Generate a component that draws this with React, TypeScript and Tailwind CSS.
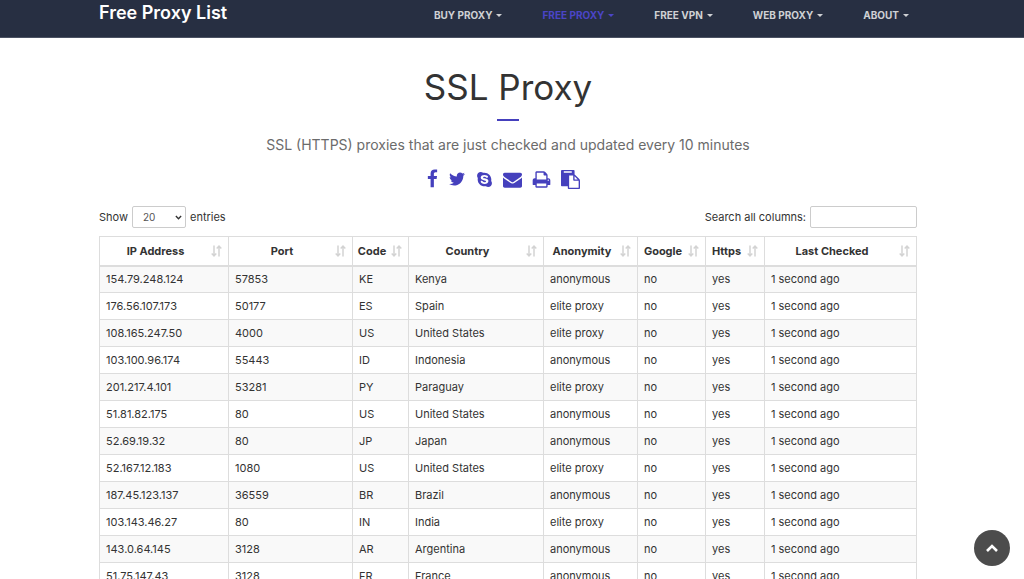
import { FaSkype } from "react-icons/fa";

type Proxy = [ip: string, port: string, code: string, country: string, anonymity: string];

const NAV = [
  { label: "BUY PROXY" },
  { label: "FREE PROXY", active: true },
  { label: "FREE VPN" },
  { label: "WEB PROXY" },
  { label: "ABOUT" },
];

const COLUMNS = [
  { label: "IP Address", width: "w-[129px]" },
  { label: "Port", width: "w-[124px]" },
  { label: "Code", width: "w-[56px]" },
  { label: "Country", width: "w-[135px]" },
  { label: "Anonymity", width: "w-[94px]" },
  { label: "Google", width: "w-[68px]" },
  { label: "Https", width: "w-[59px]" },
  { label: "Last Checked", width: "" },
];

const PROXIES: Proxy[] = [
  ["154.79.248.124", "57853", "KE", "Kenya", "anonymous"],
  ["176.56.107.173", "50177", "ES", "Spain", "elite proxy"],
  ["108.165.247.50", "4000", "US", "United States", "elite proxy"],
  ["103.100.96.174", "55443", "ID", "Indonesia", "anonymous"],
  ["201.217.4.101", "53281", "PY", "Paraguay", "elite proxy"],
  ["51.81.82.175", "80", "US", "United States", "anonymous"],
  ["52.69.19.32", "80", "JP", "Japan", "anonymous"],
  ["52.167.12.183", "1080", "US", "United States", "elite proxy"],
  ["187.45.123.137", "36559", "BR", "Brazil", "anonymous"],
  ["103.143.46.27", "80", "IN", "India", "elite proxy"],
  ["143.0.64.145", "3128", "AR", "Argentina", "anonymous"],
  ["51.75.147.43", "3128", "FR", "France", "anonymous"],
];

const ICONS = {
  facebook:
    "M1343 12v264h-157q-86 0-116 36t-30 108v189h293l-39 296h-254v759h-306v-759h-255v-296h255v-218q0-186 104-288.5t277-102.5q147 0 228 12z",
  twitter:
    "M1684 408q-67 98-162 167 1 14 1 42 0 130-38 259.5t-115.5 248.5-184.5 210.5-258 146-323 54.5q-271 0-496-145 35 4 78 4 225 0 401-138-105-2-188-64.5t-114-159.5q33 5 61 5 43 0 85-11-112-23-185.5-111.5t-73.5-205.5v-4q68 38 146 41-66-44-105-115t-39-154q0-88 44-163 121 149 294.5 238.5t371.5 99.5q-8-38-8-74 0-134 94.5-228.5t228.5-94.5q140 0 236 102 109-21 205-78-37 115-142 178 93-10 186-50z",
  envelope:
    "M1792 710v794q0 66-47 113t-113 47h-1472q-66 0-113-47t-47-113v-794q44 49 101 87 362 246 497 345 57 42 92.5 65.5t94.5 48 110 24.5h2q51 0 110-24.5t94.5-48 92.5-65.5q170-123 498-345 57-39 100-87zm0-294q0 79-49 151t-122 123q-376 261-468 325-10 7-42.5 31t-54 38.8-52 32.2-57.5 27-50 9h-2q-23 0-50-9t-57.5-27-52-32.2-54-38.8-42.5-31q-91-64-262-182.5t-205-142.5q-62-42-117-115.5t-55-136.5q0-78 41.5-130t118.5-52h1472q65 0 112.5 47t47.5 113z",
  print:
    "M448 1536h896v-256h-896v256zm0-640h896v-384h-160q-40 0-68-28t-28-68v-160h-640v640zm1152 64q0-26-19-45t-45-19-45 19-19 45 19 45 45 19 45-19 19-45zm128 0v416q0 13-9.5 22.5t-22.5 9.5h-224v160q0 40-28 68t-68 28h-960q-40 0-68-28t-28-68v-160h-224q-13 0-22.5-9.5t-9.5-22.5v-416q0-79 56.5-135.5t135.5-56.5h64v-544q0-40 28-68t68-28h672q40 0 88 20t76 48l152 152q28 28 48 76t20 88v256h64q79 0 135.5 56.5t56.5 135.5z",
  paste:
    "M768 1664h896v-640h-416q-40 0-68-28t-28-68v-416h-384v1152zm256-1440v-64q0-13-9.5-22.5t-22.5-9.5h-704q-13 0-22.5 9.5t-9.5 22.5v64q0 13 9.5 22.5t22.5 9.5h704q13 0 22.5-9.5t9.5-22.5zm256 672h299l-299-299v299zm512 128v672q0 40-28 68t-68 28h-960q-40 0-68-28t-28-68v-160h-544q-40 0-68-28t-28-68v-1344q0-40 28-68t68-28h1088q40 0 68 28t28 68v328q21 13 36 28l408 408q28 28 48 76t20 88z",
};

function Glyph({ path, viewBox = "0 0 1792 1792", className }: { path: string; viewBox?: string; className: string }) {
  return (
    <svg viewBox={viewBox} className={className} fill="currentColor" aria-hidden="true">
      <path d={path} />
    </svg>
  );
}

function SortIcon() {
  return (
    <svg viewBox="0 0 11 12" className="h-3 w-[11px]" fill="none" stroke="#d3d3d3" strokeWidth="1.5" aria-hidden="true">
      <path d="M3 0.500V10.500M0.700 8.400L3 10.900L5.300 8.400M8 11.500V1.500M5.700 3.600L8 1.100L10.300 3.600" />
    </svg>
  );
}

function Header() {
  return (
    <header className="border-b border-[#4b5263] bg-[#272f42] pr-2">
      <div className="mx-auto flex max-w-[818px] items-start justify-between pb-[11px]">
        <a href="#home" className="text-lg leading-[26px] font-semibold text-white">
          Free Proxy List
        </a>
        <nav className="flex gap-10 pt-2 pr-2">
          {NAV.map((item) => (
            <a
              key={item.label}
              href="#menu"
              className={`flex items-center gap-1 text-[10px] leading-[14px] font-bold ${item.active ? "text-[#4b45c6]" : "text-[#cfd1d4]"}`}
            >
              {item.label}
              <svg viewBox="0 0 6 3" className="h-[3px] w-1.5" fill="currentColor" aria-hidden="true">
                <path d="M0 0H6L3 3Z" />
              </svg>
            </a>
          ))}
        </nav>
      </div>
    </header>
  );
}

function ShareLinks() {
  return (
    <div className="mt-3 flex items-center justify-center gap-2.5 pr-2.5 text-[#4540bd]">
      <a href="#facebook" aria-label="Facebook">
        <Glyph path={ICONS.facebook} viewBox="400 0 1024 1792" className="h-5 w-[11px]" />
      </a>
      <a href="#twitter" aria-label="Twitter">
        <Glyph path={ICONS.twitter} className="size-[18px]" />
      </a>
      <a href="#skype" aria-label="Skype">
        <FaSkype className="size-[17px]" />
      </a>
      <a href="#email" aria-label="Email">
        <Glyph path={ICONS.envelope} className="size-[19px]" />
      </a>
      <button type="button" aria-label="Print">
        <Glyph path={ICONS.print} className="size-[19px]" />
      </button>
      <button type="button" aria-label="Copy list">
        <Glyph path={ICONS.paste} className="size-[19px]" />
      </button>
    </div>
  );
}

export default function App() {
  return (
    <div className="min-h-screen bg-white font-['Inter',sans-serif] text-[#333]">
      <Header />
      <main className="pt-[25px] pr-2 pb-8">
        <div className="mx-auto max-w-[818px]">
          <section className="text-center">
            <h1 className="text-[35px] leading-[48px]">SSL Proxy</h1>
            <div className="mx-auto mt-2 h-0.5 w-[22px] bg-[#4540bd]" />
            <p className="mt-3 text-sm leading-6 text-[#6b6b6b]">
              SSL (HTTPS) proxies that are just checked and updated every 10 minutes
            </p>
            <ShareLinks />
          </section>

          <div className="mt-[17px] flex items-center justify-between text-[11px]">
            <label className="flex items-center gap-1">
              Show
              <span className="relative flex items-center">
                <select
                  defaultValue="20"
                  className="h-[22px] w-[54px] appearance-none rounded-xs border border-[#ccc] bg-white pl-2.5 text-[10px] text-[#555]"
                >
                  <option>20</option>
                  <option>40</option>
                  <option>80</option>
                </select>
                <svg viewBox="0 0 8 5" className="pointer-events-none absolute right-1 h-[5px] w-[7px]" fill="none" stroke="#333" strokeWidth="1.6" aria-hidden="true">
                  <path d="M1 0.800L4 3.900L7 0.800" />
                </svg>
              </span>
              entries
            </label>
            <label className="flex items-center gap-1">
              Search all columns:
              <input type="search" className="h-[22px] w-[107px] rounded-xs border border-[#ccc] bg-white px-2 outline-none" />
            </label>
          </div>

          <table className="mt-2 w-full table-fixed border-collapse border border-[#ddd] text-[11px] leading-4">
            <thead>
              <tr className="h-[29px]">
                {COLUMNS.map((column) => (
                  <th
                    key={column.label}
                    scope="col"
                    className={`border border-b-2 border-[#ddd] p-0 font-bold ${column.width}`}
                  >
                    <span className="flex items-center gap-1 pr-1.5 pl-1">
                      <span className="flex-1 text-center whitespace-nowrap">{column.label}</span>
                      <SortIcon />
                    </span>
                  </th>
                ))}
              </tr>
            </thead>
            <tbody>
              {PROXIES.map((proxy) => (
                <tr key={proxy[0]} className="h-[27px] odd:bg-[#f9f9f9]">
                  {[...proxy, "no", "yes", "1 second ago"].map((value, index) => (
                    <td key={index} className="border border-[#ddd] px-1.5 py-0 whitespace-nowrap">
                      {value}
                    </td>
                  ))}
                </tr>
              ))}
            </tbody>
          </table>
        </div>
      </main>
      <button
        type="button"
        aria-label="Back to top"
        className="fixed right-3.5 bottom-[13px] flex size-9 items-center justify-center rounded-full bg-[#4c4c4c]"
      >
        <svg viewBox="0 0 12 8" className="h-2 w-3" fill="none" stroke="#fff" strokeWidth="2.6" aria-hidden="true">
          <path d="M1 7L6 2L11 7" />
        </svg>
      </button>
    </div>
  );
}
